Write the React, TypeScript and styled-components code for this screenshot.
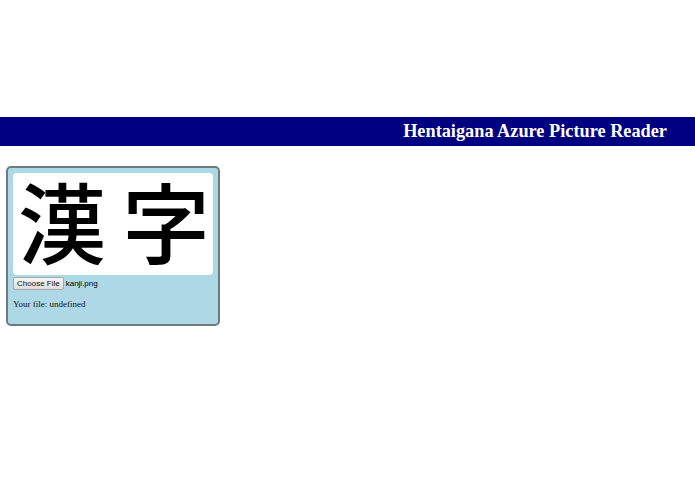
import styled, { createGlobalStyle } from "styled-components";

const GlobalStyle = createGlobalStyle`
  html, body {
    margin: 0;
    padding: 0;
    background: #fff;
    font-family: "Liberation Serif", "Times New Roman", serif;
  }
`;

const Page = styled.div`
  padding-top: 117px;
`;

const Header = styled.header`
  height: 29px;
  background: #000080;
  color: #fff;
  display: flex;
  align-items: center;
  justify-content: flex-end;
  padding-right: 28px;
  font-family: "Liberation Serif", "Times New Roman", serif;
  font-weight: bold;
  font-size: 18.3px;
`;

const Panel = styled.div`
  margin: 20px 0 0 6px;
  width: 200px;
  padding: 5px 5px 15px;
  background: #add8e6;
  border: 2px solid #6f7a7e;
  border-radius: 5px;
`;

const Preview = styled.div`
  width: 200px;
  height: 102px;
  background: #fff;
  border-radius: 4px;
  display: flex;
  align-items: flex-start;
  gap: 16px;
  padding: 2px 0 0 5px;
  box-sizing: border-box;
  font-family: "Noto Sans CJK JP", "Noto Sans", sans-serif;
  font-weight: 500;
  font-size: 88px;
  line-height: 1;
  color: #000;
`;

const FileRow = styled.div`
  display: flex;
  align-items: center;
  gap: 2px;
  margin-top: 2px;
  font-family: "Liberation Sans", Arial, sans-serif;
  font-size: 8px;
`;

const FakeButton = styled.span`
  display: inline-flex;
  align-items: center;
  justify-content: center;
  height: 13px;
  padding: 0 3px;
  box-sizing: border-box;
  border: 1px solid #a8a8a8;
  border-radius: 2px;
  background: linear-gradient(#f6f6f6, #dedede);
  color: #111;
  font-size: 8px;
`;

const Status = styled.p`
  margin: 9px 0 0;
  font-size: 9px;
  color: #111;
`;

export default function App() {
  return (
    <>
      <GlobalStyle />
      <Page>
        <Header>Hentaigana Azure Picture Reader</Header>
        <Panel>
          <Preview>
            <span>漢</span>
            <span>字</span>
          </Preview>
          <FileRow>
            <FakeButton>Choose File</FakeButton>
            <span>kanji.png</span>
          </FileRow>
          <Status>Your file: undefined</Status>
        </Panel>
      </Page>
    </>
  );
}
